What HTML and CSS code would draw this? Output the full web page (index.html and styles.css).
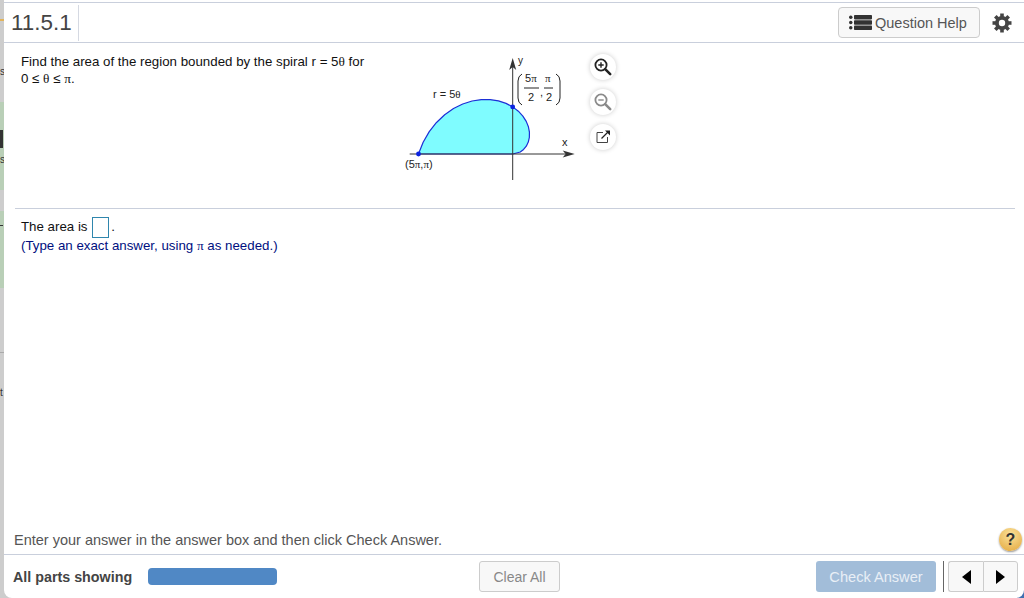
FILE: index.html
```html
<!DOCTYPE html>
<html lang="en">
<head>
  <meta charset="UTF-8">
  <title>11.5.1</title>
  <link rel="stylesheet" href="styles.css">
</head>
<body>

  <div class="strip">
    <div class="strip-top"></div>
    <div class="strip-dash"></div>
    <div class="strip-a">s</div>
    <div class="strip-b"><div class="strip-blob"></div><span>s</span></div>
    <div class="strip-c"></div>
    <div class="strip-d"><div class="strip-tick"></div></div>
    <div class="strip-e"></div>
    <div class="strip-f">t</div>
  </div>

  <div class="panel">
    <div class="header">
      <div class="title">11.5.1</div>
      <div class="header-right">
        <button class="help-btn">
          <svg class="list-icon" width="23" height="15" viewBox="0 0 23 15">
            <g fill="#333">
              <rect x="0" y="0.5" width="3.5" height="3.5" rx="1.7"/>
              <rect x="0" y="5.7" width="3.5" height="3.5" rx="1.7"/>
              <rect x="0" y="11" width="3.5" height="3.5" rx="1.7"/>
              <rect x="5" y="0" width="18" height="4.4" rx="0.8"/>
              <rect x="5" y="5.3" width="18" height="4.4" rx="0.8"/>
              <rect x="5" y="10.6" width="18" height="4.4" rx="0.8"/>
            </g>
          </svg>
          Question Help
        </button>
        <svg class="gear" width="20" height="20" viewBox="0 0 20 20">
          <g stroke="#444" stroke-width="3.6">
            <line x1="10" y1="0.5" x2="10" y2="19.5"/>
            <line x1="0.5" y1="10" x2="19.5" y2="10"/>
            <line x1="3.3" y1="3.3" x2="16.7" y2="16.7"/>
            <line x1="16.7" y1="3.3" x2="3.3" y2="16.7"/>
          </g>
          <circle cx="10" cy="10" r="7" fill="#444"/>
          <circle cx="10" cy="10" r="3.2" fill="#fff"/>
        </svg>
      </div>
    </div>

    <div class="question">
      <div class="question-text">
        Find the area of the region bounded by the spiral r = 5<span class="sym">θ</span> for<br>
        0 ≤ <span class="sym">θ</span> ≤ <span class="sym">π</span>.
      </div>
      <svg class="graph" width="190" height="140" viewBox="0 0 190 140">
        <g transform="translate(122.7 109)">
          <polygon fill="#7ffcff" stroke="#1c2fd6" stroke-width="1.2" stroke-linejoin="round" points="0,0 7.59,-2.03 10.88,-4.51 13.6,-7.85 15.58,-11.95 16.66,-16.66 16.73,-21.81 15.71,-27.21 13.53,-32.65 10.16,-37.93 5.64,-42.83 0,-47.12 -6.66,-50.61 -14.23,-53.1 -22.54,-54.42 -31.42,-54.41 -40.64,-52.97 -49.98,-49.98 -59.19,-45.42 -68.02,-39.27 -76.19,-31.56 -83.45,-22.36 -89.55,-11.79 -94.25,0"/>
          <line x1="-103" y1="0" x2="56" y2="0" stroke="#333"/>
          <polygon points="62,0 50,-3.5 53,0 50,3.5" fill="#333"/>
          <line x1="0" y1="-92" x2="0" y2="26" stroke="#333"/>
          <polygon points="0,-96 -3.5,-84 0,-87 3.5,-84" fill="#333"/>
          <circle cx="0" cy="-47.1" r="2.4" fill="#0a22e0"/>
          <circle cx="-94.2" cy="0" r="2.4" fill="#0a22e0"/>
        </g>
        <g class="graph-label">
          <text x="128" y="19" class="axis-y">y</text>
          <text x="172" y="101">x</text>
          <text x="43" y="53">r = 5<tspan class="sym">θ</tspan></text>
          <text x="15" y="122.5">(5<tspan class="sym">π</tspan>,<tspan class="sym">π</tspan>)</text>
          <text x="135" y="37">5<tspan class="sym">π</tspan></text>
          <text x="138" y="56">2</text>
          <text x="155" y="37" class="sym">π</text>
          <text x="156" y="56">2</text>
          <text x="150" y="51">,</text>
        </g>
        <line x1="134" y1="43" x2="149" y2="43" stroke="#222"/>
        <line x1="154" y1="43" x2="163" y2="43" stroke="#222"/>
        <path d="M132 29 Q128 31 128 36 V53 Q128 58 132 60" fill="none" stroke="#222"/>
        <path d="M166 29 Q170 31 170 36 V53 Q170 58 166 60" fill="none" stroke="#222"/>
      </svg>
      <div class="tools">
        <div class="tool">
          <svg width="20" height="20" viewBox="0 0 20 20">
            <circle cx="8" cy="8" r="5.6" fill="none" stroke="#222" stroke-width="1.8"/>
            <path d="M5.3 8h5.4M8 5.3v5.4" stroke="#222" stroke-width="1.4"/>
            <path d="M12.2 12.2l5 5" stroke="#222" stroke-width="2.6" stroke-linecap="round"/>
          </svg>
        </div>
        <div class="tool">
          <svg width="20" height="20" viewBox="0 0 20 20">
            <circle cx="8" cy="8" r="5.6" fill="none" stroke="#8a8a8a" stroke-width="1.8"/>
            <path d="M5.3 8h5.4" stroke="#8a8a8a" stroke-width="1.4"/>
            <path d="M12.2 12.2l5 5" stroke="#8a8a8a" stroke-width="2.6" stroke-linecap="round"/>
          </svg>
        </div>
        <div class="tool">
          <svg width="20" height="20" viewBox="0 0 20 20">
            <path d="M10 5.5H4v10h10.5V10" fill="none" stroke="#444" stroke-width="1"/>
            <path d="M8.5 11.5l7-7" stroke="#222" stroke-width="1.3"/>
            <path d="M12 3.5h5v5z" fill="#222"/>
          </svg>
        </div>
      </div>
    </div>

    <div class="answer">
      <div>The area is <span class="answer-box"></span>.</div>
      <div class="hint">(Type an exact answer, using <span class="sym">π</span> as needed.)</div>
    </div>

    <div class="instructions">
      <span>Enter your answer in the answer box and then click Check Answer.</span>
      <div class="help-circle">?</div>
    </div>

    <div class="footer">
      <div class="footer-left">
        <span class="parts">All parts showing</span>
        <div class="progress"></div>
      </div>
      <button class="clear-btn">Clear All</button>
      <div class="footer-right">
        <button class="check-btn">Check Answer</button>
        <div class="nav">
          <button class="nav-btn"><span class="arrow-left"></span></button>
          <button class="nav-btn"><span class="arrow-right"></span></button>
        </div>
      </div>
    </div>
  </div>

</body>
</html>
```

FILE: styles.css
```css
html, body {
  height: 100%;
}

body {
  margin: 0;
  width: 1024px;
  height: 598px;
  overflow: hidden;
  display: flex;
  font-family: "Liberation Sans", Arial, sans-serif;
  background: linear-gradient(to right, #cdcdcd 50%, #3f6fb0 50%);
}

.sym {
  font-family: "Liberation Serif", serif;
}

/* sliver of the page behind the window */
.strip {
  width: 4px;
  flex-shrink: 0;
  display: flex;
  flex-direction: column;
  font-size: 10px;
  line-height: 12px;
  color: #333;
  background: #cdcdcd;
  overflow: hidden;
  text-align: left;
}

.strip-top {
  height: 19px;
}

.strip-dash {
  height: 2px;
  background: #e2b45c;
}

.strip-a {
  height: 81px;
  box-sizing: border-box;
  padding-top: 45px;
}

.strip-b {
  height: 88px;
  box-sizing: border-box;
  padding-top: 28px;
  background: #b9cfb7;
}

.strip-blob {
  width: 3px;
  height: 18px;
  margin-bottom: 6px;
  background: #333;
}

.strip-b span {
  display: block;
}

.strip-c {
  height: 21px;
}

.strip-d {
  height: 77px;
  box-sizing: border-box;
  padding-top: 14px;
  background: #b9cfb7;
}

.strip-tick {
  width: 3px;
  height: 1px;
  background: #333;
}

.strip-e {
  height: 64px;
  border-bottom: 1px solid #aaa;
}

.strip-f {
  flex: 1;
  padding-top: 34px;
}

.panel {
  flex: 1;
  display: flex;
  flex-direction: column;
  padding-top: 2px;
  background: #fff;
  border-radius: 0 0 8px 8px;
}

.header {
  height: 39px;
  display: flex;
  align-items: center;
  justify-content: space-between;
  border-top: 1px solid #c9cfdc;
  border-bottom: 1px solid #c9cfdc;
}

.title {
  height: 36px;
  width: 67px;
  margin-left: 7px;
  line-height: 36px;
  font-size: 22.4px;
  color: #444;
  border-right: 1px solid #d5d9e2;
}

.header-right {
  display: flex;
  align-items: center;
  gap: 12px;
  margin-right: 12px;
}

.help-btn {
  width: 142px;
  height: 31px;
  padding: 0 0 0 10px;
  display: flex;
  align-items: center;
  gap: 3px;
  font-family: inherit;
  font-size: 14.5px;
  color: #555;
  background: #f8f8f8;
  border: 1px solid #ccc;
  border-radius: 4px;
}

.question {
  height: 165px;
  display: flex;
  margin: 0 9px 0 11px;
  border-bottom: 1px solid #c9cfdc;
}

.question-text {
  width: 369px;
  padding: 10px 0 0 6px;
  font-size: 13.3px;
  line-height: 17px;
  color: #111;
}

.graph {
  margin-top: 2px;
}

.graph-label {
  font-size: 11px;
  fill: #222;
}

.axis-y {
  font-size: 10px;
}

.tools {
  display: flex;
  flex-direction: column;
  gap: 9px;
  margin: 11px 0 0 10px;
}

.tool {
  width: 26px;
  height: 26px;
  display: flex;
  align-items: center;
  justify-content: center;
  background: #fff;
  border-radius: 50%;
  box-shadow: 0 0 5px rgba(0, 0, 0, 0.2);
}

.answer {
  flex: 1;
  padding: 7px 0 0 17px;
  font-size: 13.3px;
  color: #111;
}

.answer > div {
  line-height: 21px;
}

.answer-box {
  display: inline-block;
  width: 15px;
  height: 19px;
  margin: 0 2px 0 1px;
  vertical-align: middle;
  border: 1px solid #2f86ad;
}

.hint {
  margin-top: -3px;
  color: #000f80;
}

.instructions {
  display: flex;
  align-items: center;
  justify-content: space-between;
  height: 30px;
  padding: 0 2px 0 10px;
  font-size: 14.5px;
  color: #555;
}

.instructions span {
  padding-top: 1px;
}

.help-circle {
  width: 23px;
  height: 23px;
  line-height: 23px;
  text-align: center;
  font-size: 16px;
  font-weight: bold;
  color: #333;
  border-radius: 50%;
  background: radial-gradient(circle at 50% 30%, #fbe29a, #e2a63c);
  box-shadow: 0 1px 2px rgba(0, 0, 0, 0.4);
}

.footer {
  height: 43px;
  display: flex;
  align-items: center;
  border-top: 1px solid #c9cfdc;
  padding: 0 6px 0 9px;
}

.footer-left {
  width: 466px;
  display: flex;
  align-items: center;
  gap: 16px;
}

.parts {
  font-size: 14.3px;
  font-weight: bold;
  color: #444;
}

.progress {
  width: 129px;
  height: 17px;
  background: #5088c5;
  border-radius: 4px;
}

.clear-btn {
  width: 81px;
  height: 31px;
  padding: 0;
  font-family: inherit;
  font-size: 14px;
  color: #888;
  background: #f8f8f8;
  border: 1px solid #ccc;
  border-radius: 3px;
}

.footer-right {
  margin-left: auto;
  display: flex;
  align-items: center;
}

.check-btn {
  width: 120px;
  height: 31px;
  padding: 0;
  font-family: inherit;
  font-size: 14.6px;
  color: #e9eff6;
  background: #a2bdd9;
  border: none;
  border-radius: 3px;
}

.nav {
  display: flex;
  margin-left: 7px;
  padding-left: 4px;
  border-left: 1px solid #666;
}

.nav-btn {
  width: 35px;
  height: 31px;
  padding: 0;
  display: flex;
  align-items: center;
  justify-content: center;
  background: #f8f8f8;
  border: 1px solid #ccc;
}

.nav-btn:first-child {
  border-right: none;
  border-radius: 3px 0 0 3px;
}

.nav-btn:last-child {
  border-radius: 0 3px 3px 0;
}

.arrow-left {
  border-top: 7px solid transparent;
  border-bottom: 7px solid transparent;
  border-right: 9px solid #000;
}

.arrow-right {
  border-top: 7px solid transparent;
  border-bottom: 7px solid transparent;
  border-left: 9px solid #000;
}
```
